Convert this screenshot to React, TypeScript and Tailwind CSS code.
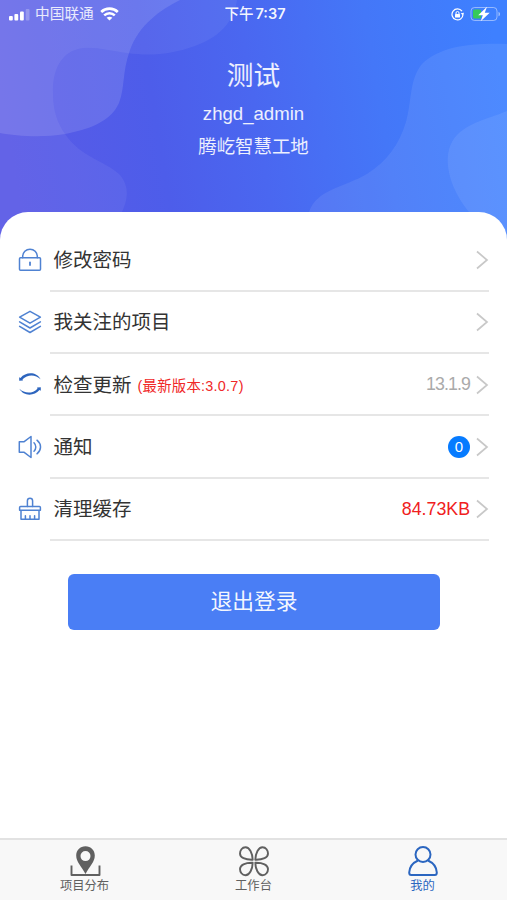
import type { ReactNode } from "react";

function HeaderWaves() {
    return (
        <svg
            className="absolute inset-0 h-full w-full"
            viewBox="0 0 507 242"
            preserveAspectRatio="none"
        >
            <defs>
                <linearGradient id="sky" gradientUnits="userSpaceOnUse" x1="10" y1="150" x2="500" y2="70">
                    <stop offset="0" stopColor="#5a5ae6" />
                    <stop offset="0.3" stopColor="#4d5dea" />
                    <stop offset="0.5" stopColor="#4a67f0" />
                    <stop offset="0.75" stopColor="#4477f8" />
                    <stop offset="1" stopColor="#3e80ff" />
                </linearGradient>
            </defs>
            <rect width="507" height="242" fill="url(#sky)" />
            <g fill="#ffffff">
                <path
                    fillOpacity="0.06"
                    d="M0 0H237C234 20 222 36 195 46C170 55 149 56 127 53C110 51 98 47 84 48C60 50 52 72 53 94C53 112 58 124 65 134C80 157 106 161 120 175C130 187 128 200 121 214V242H0Z"
                />
                <path
                    fillOpacity="0.12"
                    d="M0 0H180C160 10 139 25 130 50C122 72 125 88 119 103C110 123 86 130 65 134C42 138 16 136 0 133Z"
                />
                <path
                    fillOpacity="0.08"
                    d="M507 44C470 43 441 46 422 64C409 80 412 101 406 122C399 145 387 161 367 174C345 187 317 189 309 212V242H507Z"
                />
                <path
                    fillOpacity="0.08"
                    d="M507 111C486 120 463 123 452 142C443 158 448 186 469 212L490 242H507Z"
                />
            </g>
        </svg>
    );
}

function StatusBar() {
    return (
        <div className="relative flex h-7 items-center justify-between pl-[9px] pr-[6px] text-[14.7px] leading-none text-white/85">
            <div className="flex w-[160px] items-center">
                <svg className="mt-0.5 h-3 w-[22px]" viewBox="0 0 22 12" fill="#fff">
                    <rect x="0" y="7" width="3.8" height="4.4" rx="1" />
                    <rect x="5.4" y="5" width="3.8" height="6.4" rx="1" />
                    <rect x="11" y="2.5" width="3.8" height="8.9" rx="1" />
                    <rect x="16.7" y="0" width="3.8" height="11.4" rx="1" opacity="0.25" />
                </svg>
                <span className="ml-1">中国联通</span>
                <svg className="ml-1.5 h-[14px] w-[19px]" viewBox="0 0 19 14" fill="none" stroke="#fff">
                    <path d="M1.2 5C5.8 .6 13.2 .6 17.8 5" strokeWidth="2.7" />
                    <path d="M4.2 8.3C7.2 5.4 11.8 5.4 14.8 8.3" strokeWidth="2.5" />
                    <path d="M6.6 10.7C8.3 9.3 10.7 9.3 12.4 10.7L9.5 13.5Z" fill="#fff" stroke="none" />
                </svg>
            </div>
            <div className="flex items-center font-medium text-white/95">
                <span className="text-[14.5px]">下午</span>
                <span className="ml-[2px] font-[Inter] text-[14.5px] font-semibold">7:37</span>
            </div>
            <div className="flex w-[160px] items-center justify-end gap-[6px]">
                <svg className="h-[13px] w-[13px]" viewBox="0 0 13 13" fill="none" stroke="#fff">
                    <path d="M11 3.2A5.5 5.5 0 1 0 12 6.5" strokeWidth="1.2" />
                    <path d="M9.7 5.3 12 7.4 13 4.8Z" fill="#fff" stroke="none" />
                    <rect x="4" y="6" width="5" height="3.6" rx=".5" fill="#fff" stroke="none" />
                    <path d="M5 6V5a1.5 1.5 0 0 1 3 0v1" />
                </svg>
                <svg className="-mt-px h-[16px] w-[31px]" viewBox="0 0 31 16">
                    <rect x="1" y="1.5" width="26" height="13" rx="3.5" fill="none" stroke="#fff" strokeOpacity="0.45" />
                    <path d="M28.5 5.7c2 .8 2 3.8 0 4.6Z" fill="#fff" opacity="0.5" />
                    <rect x="3" y="3.5" width="8" height="9" rx="1.5" fill="#35ca5b" />
                    <path d="M17 .7 8.2 9.2h4.6L10.7 15.300 19.700 6.800h-4.900Z" fill="#fff" />
                </svg>
            </div>
        </div>
    );
}

function LineIcon({ children }: { children: ReactNode }) {
    return (
        <svg
            className="h-6 w-6 shrink-0"
            viewBox="0 0 24 24"
            fill="none"
            stroke="#4f82d2"
            strokeWidth="1.5"
            strokeLinecap="round"
            strokeLinejoin="round"
        >
            {children}
        </svg>
    );
}

function Chevron() {
    return (
        <svg
            className="ml-[6px] h-5 w-[13px] shrink-0"
            viewBox="0 0 13 20"
            fill="none"
            stroke="#c8c8c8"
            strokeWidth="1.7"
        >
            <path d="M1 1.500 11 10 1 18.500" />
        </svg>
    );
}

const lockIcon = (
    <LineIcon>
        <rect x="1.5" y="9.7" width="21" height="12.6" rx="1" />
        <path d="M4.7 9.7V8.500a7.300 7.300 0 0 1 14.600 0v1.200" />
        <path d="M12 14.300v2.800" strokeWidth="1.8" />
    </LineIcon>
);

const layersIcon = (
    <LineIcon>
        <path d="M12 1.300 22.400 7.200 12 13.200 1.600 7.200Z" />
        <path d="M1.600 11.900 12 18l10.400-6.100M1.600 16.300 12 22.500l10.400-6.200" />
    </LineIcon>
);

const refreshIcon = (
    <LineIcon>
        <g fill="#2d65be" stroke="none">
            <path d="M1.200 8.800V5.300l1.300.6C7.800-.2 18.300-.6 22.600 7.200 17.400 2 9.300 2.200 4.600 7.300l.3 1.200Z" />
            <path d="M22.800 15.200v3.500l-1.300-.6C16.200 24.200 5.700 24.600 1.400 16.800c5.200 5.200 13.300 5 18-.1l-.3-1.200Z" />
        </g>
    </LineIcon>
);

const speakerIcon = (
    <LineIcon>
        <path d="M1.300 6.700h4.900L13 1.500v21l-6.800-5.200H1.300Z" />
        <path d="M16 7.800c2.400 2.300 2.400 6.100 0 8.400M19 5.200c4.700 3.900 4.700 9.700 0 13.600" />
    </LineIcon>
);

const brushIcon = (
    <LineIcon>
        <path d="M9.400 9.400V3.800a2.600 2.600 0 0 1 5.200 0v5.600" />
        <path d="M2.600 9.400h18.800q1 0 1 1v2.800H1.600v-2.800q0-1 1-1ZM3 13.200v9.100h18v-9.100" />
        <path d="M7.400 18.700v3.400M12 18.700v3.400M16.600 18.700v3.400" />
    </LineIcon>
);

interface MenuRowProps {
    icon: ReactNode;
    label: string;
    note?: string;
    children?: ReactNode;
}

function MenuRow({ icon, label, note, children }: MenuRowProps) {
    return (
        <li className="flex h-[62.3px] items-stretch px-[18px]">
            <div className="flex w-8 items-center pb-[1.5px]">{icon}</div>
            <div className="flex flex-1 items-center border-b-2 border-[#e6e6e6] pl-[3.5px] pt-px">
                <span className="pt-px text-[19.5px] text-[#333]">{label}</span>
                {note && (
                    <span className="ml-[6px] mt-[4px] text-[14.4px] tracking-[0.25px] text-[#f02828]">
                        {note}
                    </span>
                )}
                <div className="ml-auto flex items-center text-[17.8px]">
                    {children}
                    <Chevron />
                </div>
            </div>
        </li>
    );
}

interface TabProps {
    label: string;
    active?: boolean;
    children: ReactNode;
}

function Tab({ label, active, children }: TabProps) {
    return (
        <button
            className={`flex flex-1 flex-col items-center pt-[5px] ${active ? "text-[#2b66c0]" : "text-[#606060]"}`}
        >
            <svg
                className="h-8 w-8"
                viewBox="0 0 32 32"
                fill="none"
                stroke="currentColor"
                strokeWidth="1.9"
                strokeLinejoin="round"
            >
                {children}
            </svg>
            <span className="mt-[2px] text-[12.3px] leading-[15px]">{label}</span>
        </button>
    );
}

export default function App() {
    return (
        <div className="flex h-[900px] w-full flex-col bg-white font-['Liberation_Sans','Noto_Sans_CJK_SC',sans-serif]">
            <header className="relative h-[242px] shrink-0 text-center text-white">
                <HeaderWaves />
                <StatusBar />
                <div className="relative flex flex-col items-center text-white/90">
                    <h1 className="mt-[29px] text-[26.7px] leading-[38px]">测试</h1>
                    <p className="mt-[4px] text-[18.6px] leading-[30px]">zhgd_admin</p>
                    <p className="mt-[3px] text-[18.4px] leading-[30px]">腾屹智慧工地</p>
                </div>
            </header>

            <main className="relative -mt-[30px] flex-1 rounded-t-[28px] bg-white pt-[17.5px]">
                <ul>
                    <MenuRow icon={lockIcon} label="修改密码" />
                    <MenuRow icon={layersIcon} label="我关注的项目" />
                    <MenuRow icon={refreshIcon} label="检查更新" note="(最新版本:3.0.7)">
                        <span className="tracking-[-0.9px] text-[#aaa]">13.1.9</span>
                    </MenuRow>
                    <MenuRow icon={speakerIcon} label="通知">
                        <span className="flex h-[22px] w-[22px] items-center justify-center rounded-full bg-[#067bff] text-[15px] text-white">
                            0
                        </span>
                    </MenuRow>
                    <MenuRow icon={brushIcon} label="清理缓存">
                        <span className="text-[#f02020]">84.73KB</span>
                    </MenuRow>
                </ul>
                <button className="mx-[68px] mt-[33px] flex h-[56px] w-[372px] items-center justify-center rounded-md bg-[#4a7ef5] pt-px text-[21.8px] text-white/95">
                    退出登录
                </button>
            </main>

            <nav className="flex h-[62px] shrink-0 border-t-2 border-[#e2e2e2] bg-[#f8f8f8]">
                <Tab label="项目分布">
                    <path d="M2.500 20.500v9.500h28v-9.500" />
                    <path
                        d="M16.500 1.300c-5.400 0-9.300 4.100-9.300 9.200 0 6.700 5.300 10.500 9.300 18.500 4-8 9.300-11.800 9.300-18.500 0-5.100-3.900-9.200-9.300-9.200Zm0 4.800a5 5 0 1 1 0 10 5 5 0 0 1 0-10Z"
                        fill="currentColor"
                        fillRule="evenodd"
                        stroke="none"
                    />
                </Tab>
                <Tab label="工作台">
                    <path d="M14.700 14.800C14.500 8 11.500 2.200 7.500 2.200 4 2.200 2 5.500 2 8.500c0 4 5 6.500 12.700 6.300Z" />
                    <path d="M17.300 14.800C17.500 8 20.500 2.200 24.500 2.200c3.500 0 5.500 3.300 5.500 6.300 0 4-5 6.500-12.700 6.300Z" />
                    <path d="M14.700 17.700C14.500 24.500 11.500 30.300 7.500 30.300 4 30.300 2 27 2 24c0-4 5-6.500 12.700-6.300Z" />
                    <path d="M17.300 17.700c.2 6.800 3.200 12.600 7.200 12.600 3.500 0 5.500-3.300 5.500-6.300 0-4-5-6.500-12.700-6.300Z" />
                </Tab>
                <Tab label="我的" active>
                    <circle cx="16" cy="9.500" r="7.500" strokeWidth="2" />
                    <path
                        d="M11 15.500C5.500 18 2.500 22 2.200 27.500q0 2.500 2 2.500h23.600q2 0 2-2.500C29.500 22 26.500 18 21 15.500"
                        strokeWidth="2"
                    />
                </Tab>
            </nav>
        </div>
    );
}
